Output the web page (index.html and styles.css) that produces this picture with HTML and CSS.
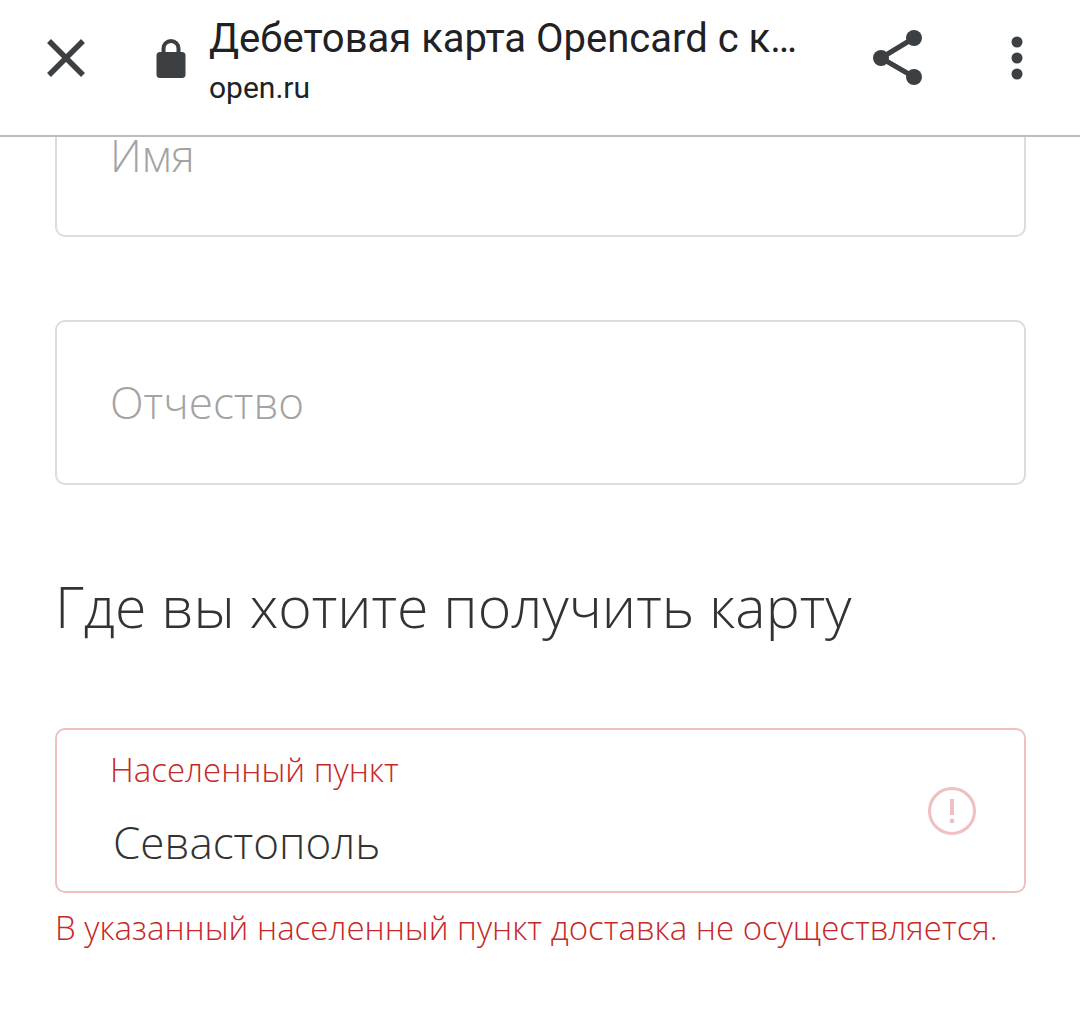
FILE: index.html
```html
<!DOCTYPE html>
<html lang="ru">
<head>
  <meta charset="UTF-8" />
  <meta name="viewport" content="width=device-width, initial-scale=1.0" />
  <title>Дебетовая карта Opencard</title>
  <link rel="stylesheet" href="styles.css">
</head>
<body>
  <header class="toolbar">
    <svg class="icon-close" width="40" height="40" viewBox="0 0 40 40">
      <path d="M3 3 L37 37 M37 3 L3 37" />
    </svg>
    <svg class="icon-lock" width="30" height="40" viewBox="0 0 30 40">
      <path class="lock-bow" d="M7.5 17 V10.5 a7.5 7.5 0 0 1 15 0 V17" />
      <rect class="lock-body" x="0.5" y="14" width="29" height="26" rx="3.5" />
    </svg>
    <div class="toolbar-titles">
      <div class="page-title">Дебетовая карта Opencard с к…</div>
      <div class="page-host">open.ru</div>
    </div>
    <svg class="icon-share" width="50" height="56" viewBox="0 0 50 56">
      <path class="share-line" d="M41 8 L8 28 L41 47" />
      <circle cx="8" cy="28" r="8" />
      <circle cx="41" cy="8" r="8" />
      <circle cx="41" cy="47" r="8" />
    </svg>
    <svg class="icon-more" width="12" height="44" viewBox="0 0 12 44">
      <circle cx="6" cy="6" r="5.5" />
      <circle cx="6" cy="22" r="5.5" />
      <circle cx="6" cy="38" r="5.5" />
    </svg>
  </header>

  <main class="form">
    <div class="field field-cut"><span class="placeholder">Имя</span></div>
    <div class="field field-middle"><span class="placeholder">Отчество</span></div>

    <h2 class="section-title">Где вы хотите получить карту</h2>

    <div class="field field-error">
      <div class="field-values">
        <div class="field-label">Населенный пункт</div>
        <div class="field-value">Севастополь</div>
      </div>
      <svg class="icon-alert" width="48" height="48" viewBox="0 0 48 48">
        <circle cx="24" cy="24" r="22.5" />
        <path d="M24 12 V28" />
        <circle class="alert-dot" cx="24" cy="34" r="2.4" />
      </svg>
    </div>
    <div class="error-text">В указанный населенный пункт доставка не осуществляется.</div>
  </main>
</body>
</html>
```

FILE: styles.css
```css
* {
  box-sizing: border-box;
}
html, body {
  margin: 0;
  height: 1015px;
  overflow: hidden;
  background: #fff;
}
body {
  font-family: "Open Sans", Arial, sans-serif;
  font-weight: 300;
}

/* browser toolbar */
.toolbar {
  display: flex;
  align-items: flex-start;
  height: 137px;
  background: #fff;
  border-bottom: 2px solid #bdbdbd;
  font-family: Roboto, Arial, sans-serif;
  font-weight: 400;
}
.icon-close {
  flex: none;
  margin: 38px 0 0 46px;
}
.icon-close path {
  stroke: #3c4043;
  stroke-width: 5.5;
  fill: none;
}
.icon-lock {
  flex: none;
  margin: 38px 0 0 70px;
}
.lock-body {
  fill: #3c4043;
}
.lock-bow {
  stroke: #3c4043;
  stroke-width: 4;
  fill: none;
}
.toolbar-titles {
  flex: none;
  width: 650px;
  margin: 16px 0 0 23px;
}
.page-title {
  font-size: 40px;
  line-height: 46px;
  color: #202124;
  white-space: nowrap;
}
.page-host {
  margin-top: 3px;
  font-size: 30px;
  line-height: 46px;
  height: 46px;
  color: #202124;
}
.icon-share {
  flex: none;
  margin: 30px 0 0 14px;
  fill: #3c4043;
}
.share-line {
  stroke: #3c4043;
  stroke-width: 5;
  fill: none;
}
.icon-more {
  flex: none;
  margin: 36px 0 0 88px;
  fill: #3c4043;
}

/* form */
.form {
  padding: 0 54px 0 55px;
}
.field {
  display: flex;
  align-items: center;
  height: 165px;
  border: 2px solid #dcdcdc;
  border-radius: 10px;
  padding-left: 53px;
}
.placeholder {
  font-size: 44px;
  color: #a3a3a3;
}
.field-cut {
  height: 100px;
  border-top: 0;
  border-top-left-radius: 0;
  border-top-right-radius: 0;
  align-items: flex-start;
}
.field-cut .placeholder {
  line-height: 36px;
}
.field-middle {
  margin-top: 83px;
  padding-bottom: 2px;
}
.section-title {
  margin: 86px 0 0;
  font-size: 57.2px;
  line-height: 70px;
  font-weight: 300;
  color: #333;
}
.field-error {
  margin-top: 87px;
  border-color: #f0bfc0;
  justify-content: space-between;
  padding-right: 48px;
}
.field-label {
  font-size: 33px;
  line-height: 40px;
  color: #c62828;
}
.field-value {
  margin: 23px 0 0 3px;
  font-size: 44px;
  line-height: 58px;
  color: #333;
}
.icon-alert {
  flex: none;
  fill: none;
  stroke: #f0bfc0;
  stroke-width: 3;
}
.icon-alert path {
  stroke-width: 4;
}
.alert-dot {
  fill: #f0bfc0;
  stroke: none;
}
.error-text {
  margin-top: 13px;
  font-size: 33px;
  line-height: 44px;
  color: #c62828;
  white-space: nowrap;
}
```
